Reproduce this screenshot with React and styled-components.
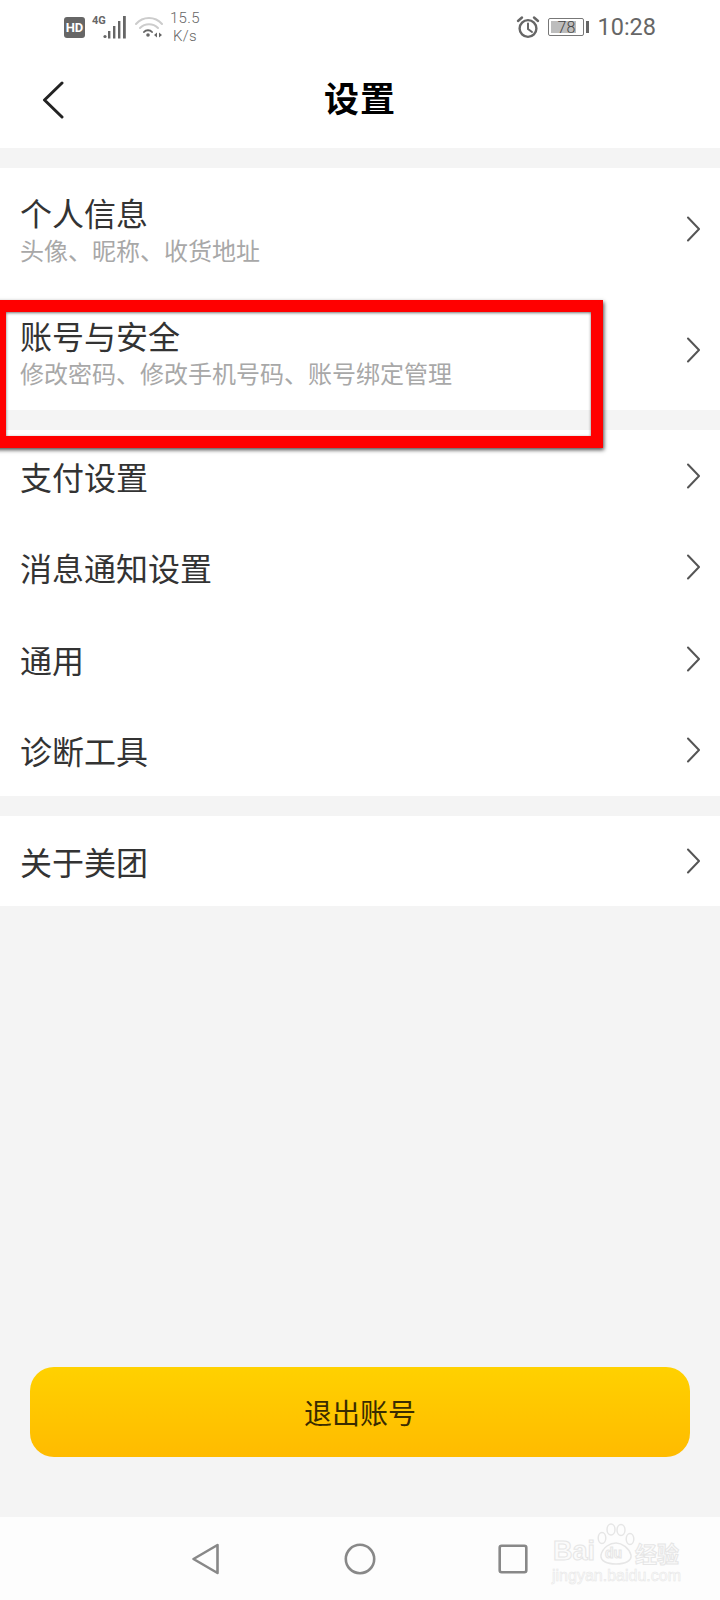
import React from 'react'
import styled, { createGlobalStyle } from 'styled-components'

const GlobalStyle = createGlobalStyle`
  html, body { margin: 0; padding: 0; background: #f4f4f4; }
  body { font-family: "Noto Sans CJK SC", "Roboto", sans-serif; }
  * { box-sizing: border-box; }
`

const Page = styled.div`
  position: relative;
  width: 720px;
  height: 1600px;
  overflow: hidden;
  display: flex;
  flex-direction: column;
  background: #f4f4f4;
`

const Top = styled.div`
  height: 148px;
  flex: none;
  background: #fff;
`

const StatusBar = styled.div`
  height: 52px;
  padding: 2px 64px 0;
  display: flex;
  align-items: center;
  justify-content: space-between;
  color: #666;
  font-family: "Roboto", sans-serif;
`

const StatusGroup = styled.div`
  display: flex;
  align-items: center;
  gap: ${({ $gap }) => $gap}px;
`

const HdBadge = styled.span`
  width: 21px;
  height: 21px;
  border-radius: 3px;
  background: #666;
  color: #fff;
  font-size: 13px;
  font-weight: 700;
  line-height: 21px;
  text-align: center;
`

const SignalWrap = styled.div`
  position: relative;
  width: 36px;
  height: 24px;
`

const FourG = styled.span`
  position: absolute;
  left: 0;
  top: -1px;
  font-size: 11px;
  font-weight: 700;
  color: #666;
`

const Speed = styled.div`
  font-size: 15px;
  line-height: 18px;
  font-weight: 300;
  text-align: center;
  color: #666;
  letter-spacing: 0.3px;
`

const Battery = styled.div`
  width: 36px;
  height: 18px;
  border: 1px solid #777;
  border-radius: 2px;
  background: linear-gradient(to right, #bdbdbd 0 78%, #fff 78%);
  background-clip: content-box;
  padding: 2px;
  font-size: 16px;
  font-weight: 300;
  line-height: 14px;
  text-align: center;
  color: #444;
`

const BatteryTip = styled.span`
  width: 3px;
  height: 12px;
  margin-left: -6px;
  background: #666;
`

const Clock = styled.span`
  font-size: 23.5px;
  color: #666;
`

const NavBar = styled.div`
  height: 96px;
  padding-bottom: 8px;
  position: relative;
  display: flex;
  align-items: center;
  justify-content: center;
`

const BackButton = styled.div`
  position: absolute;
  left: 42px;
  top: 29px;
  width: 22px;
  height: 38px;
`

const Title = styled.h1`
  margin: 0;
  font-size: 35px;
  font-weight: 700;
  color: #000;
  letter-spacing: 1px;
`

const Group = styled.section`
  margin-top: 20px;
  flex: none;
  background: #fff;
`

const Row = styled.div`
  height: ${({ $height }) => $height}px;
  padding: 0 20px;
  display: flex;
  align-items: center;
  justify-content: space-between;
`

const RowText = styled.div`
  display: flex;
  flex-direction: column;
  margin-top: ${({ $lift }) => $lift}px;
`

const RowTitle = styled.div`
  font-size: 32px;
  line-height: 46px;
  color: #333;
`

const RowSub = styled.div`
  font-size: 24px;
  line-height: 30px;
  color: #a8a8a8;
`

const Chevron = styled.svg`
  flex: none;
  width: 16px;
  height: 26px;
`

const Spacer = styled.div`
  flex: 1;
`

const LogoutButton = styled.button`
  flex: none;
  height: 90px;
  margin: 0 30px 60px;
  border: 0;
  border-radius: 24px;
  background: linear-gradient(to bottom, #ffd100, #ffbb00);
  font-family: inherit;
  font-size: 28px;
  color: #3a2c00;
`

const BottomNav = styled.nav`
  flex: none;
  height: 83px;
  background: #fdfdfd;
  display: flex;
  align-items: center;
  padding-left: 188px;
  gap: 120px;
`

const NavIcon = styled.svg`
  width: 34px;
  height: 34px;
`

const Highlight = styled.div`
  position: absolute;
  left: -6px;
  top: 300px;
  width: 609px;
  height: 148px;
  border: 12px solid #ff0000;
  box-shadow: 1px 2px 4px rgba(0, 0, 0, 0.7), inset 0 1px 3px rgba(0, 0, 0, 0.55);
`

const Watermark = styled.div`
  position: absolute;
  left: 551px;
  top: 1520px;
  width: 135px;
  height: 70px;
  color: #fbfbfb;
  -webkit-text-stroke: 1px #e6e6e6;
`

const MarkBai = styled.span`
  position: absolute;
  left: 2px;
  top: 16px;
  font-family: "Liberation Sans", sans-serif;
  font-size: 27px;
  font-weight: 700;
`

const MarkDu = styled.span`
  position: absolute;
  left: 54px;
  top: 25px;
  font-family: "Liberation Sans", sans-serif;
  font-size: 14px;
  font-weight: 700;
`

const MarkCn = styled.span`
  position: absolute;
  left: 84px;
  top: 19px;
  font-size: 22px;
  line-height: 26px;
  font-weight: 700;
`

const MarkUrl = styled.span`
  position: absolute;
  left: 1px;
  top: 47px;
  font-family: "Liberation Sans", sans-serif;
  font-size: 16px;
  -webkit-text-stroke: 0.5px #e6e6e6;
`

const MarkPaw = styled.svg`
  position: absolute;
  left: 46px;
  top: 3px;
`

const ChevronIcon = () => (
  <Chevron viewBox="0 0 16 26">
    <path d="M4 1.5 L15 13 L4 24.5" fill="none" stroke="#555" strokeWidth="2" strokeLinecap="round" strokeLinejoin="round" />
  </Chevron>
)

const items1 = [
  { title: '个人信息', sub: '头像、昵称、收货地址', lift: -4 },
  { title: '账号与安全', sub: '修改密码、修改手机号码、账号绑定管理', lift: 0 },
]
const items2 = ['支付设置', '消息通知设置', '通用', '诊断工具']

export default function App() {
  return (
    <Page>
      <GlobalStyle />
      <Top>
        <StatusBar>
          <StatusGroup $gap={7}>
            <HdBadge>HD</HdBadge>
            <SignalWrap>
              <FourG>4G</FourG>
              <svg width="36" height="24" viewBox="0 0 36 24">
                <g fill="#666">
                  <circle cx="13" cy="21.5" r="1.6" />
                  <rect x="16" y="16" width="2.4" height="7.5" />
                  <rect x="21" y="11" width="2.4" height="12.5" />
                  <rect x="26" y="6" width="2.4" height="17.5" />
                  <rect x="31" y="1" width="2.8" height="22.5" />
                </g>
              </svg>
            </SignalWrap>
            <svg width="28" height="24" viewBox="0 0 28 24">
              <g fill="none" strokeLinecap="round">
                <path d="M1 9 C8 1 20 1 27 9" stroke="#ccc" strokeWidth="2" />
                <path d="M5 13 C10 8 18 8 23 13" stroke="#ccc" strokeWidth="2" />
                <path d="M9 17 C11 14.5 15 14.5 17 17" stroke="#666" strokeWidth="2" />
              </g>
              <circle cx="13" cy="20" r="1.8" fill="#666" />
              <path d="M19 20 l3 -2.5 v5 z M24 17.5 l3 2.5 l-3 2.5 z" fill="#666" />
            </svg>
            <Speed>15.5<br />K/s</Speed>
          </StatusGroup>
          <StatusGroup $gap={8}>
            <svg width="24" height="24" viewBox="0 0 24 24">
              <g fill="none" stroke="#666" strokeWidth="2.4" strokeLinecap="round">
                <circle cx="12" cy="13.5" r="8.4" />
                <path d="M12 8.5 V14 L16 17" strokeWidth="2" />
                <path d="M2 6 L6 2.5 M22 6 L18 2.5" />
              </g>
            </svg>
            <Battery>78</Battery>
            <BatteryTip />
            <Clock>10:28</Clock>
          </StatusGroup>
        </StatusBar>
        <NavBar>
          <BackButton>
            <svg width="22" height="38" viewBox="0 0 22 38">
              <path d="M20 2 L2.5 19 L20 36" fill="none" stroke="#222" strokeWidth="3" strokeLinecap="round" strokeLinejoin="round" />
            </svg>
          </BackButton>
          <Title>设置</Title>
        </NavBar>
      </Top>

      <Group>
        {items1.map((item) => (
          <Row key={item.title} $height={121}>
            <RowText $lift={item.lift}>
              <RowTitle>{item.title}</RowTitle>
              <RowSub>{item.sub}</RowSub>
            </RowText>
            <ChevronIcon />
          </Row>
        ))}
      </Group>

      <Group>
        {items2.map((title) => (
          <Row key={title} $height={91.5}>
            <RowTitle>{title}</RowTitle>
            <ChevronIcon />
          </Row>
        ))}
      </Group>

      <Group>
        <Row $height={90}>
          <RowTitle>关于美团</RowTitle>
          <ChevronIcon />
        </Row>
      </Group>

      <Spacer />
      <LogoutButton>退出账号</LogoutButton>

      <BottomNav>
        <NavIcon viewBox="0 0 34 34">
          <path d="M29.5 3 V31 L5.5 17 Z" fill="none" stroke="#888" strokeWidth="2.6" strokeLinejoin="round" />
        </NavIcon>
        <NavIcon viewBox="0 0 34 34">
          <circle cx="18" cy="17" r="14.2" fill="none" stroke="#888" strokeWidth="2.6" />
        </NavIcon>
        <NavIcon viewBox="0 0 34 34">
          <rect x="3.7" y="3.7" width="26.6" height="26.6" rx="2" fill="none" stroke="#888" strokeWidth="2.6" />
        </NavIcon>
      </BottomNav>

      <Highlight />

      <Watermark>
        <MarkPaw width="38" height="42" viewBox="0 0 38 42">
          <g fill="#fdfdfd" stroke="#e6e6e6" strokeWidth="1.5">
            <ellipse cx="5" cy="15" rx="3.8" ry="5.5" />
            <ellipse cx="14" cy="6.5" rx="4" ry="5.5" />
            <ellipse cx="24" cy="7" rx="4" ry="5.5" />
            <ellipse cx="33" cy="16" rx="3.8" ry="5.5" />
            <path d="M4 32 C6 24 13 20 19 20 C25 20 32 25 34 32 C35 38 28 41 19 41 C10 41 3 38 4 32 Z" />
          </g>
        </MarkPaw>
        <MarkBai>Bai</MarkBai>
        <MarkDu>du</MarkDu>
        <MarkCn>经验</MarkCn>
        <MarkUrl>jingyan.baidu.com</MarkUrl>
      </Watermark>
    </Page>
  )
}
